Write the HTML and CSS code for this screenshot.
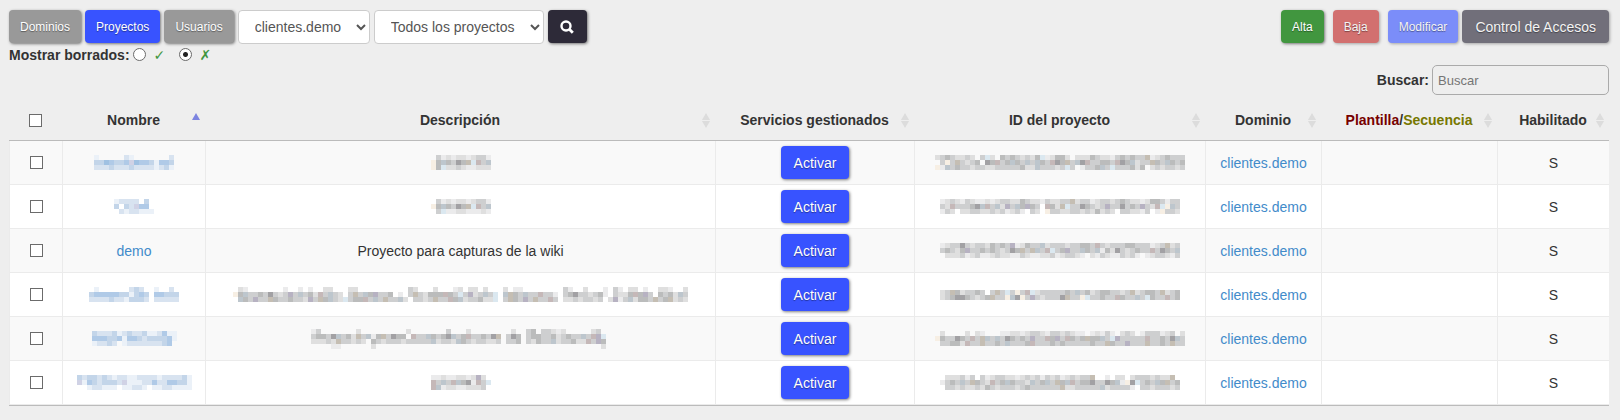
FILE: index.html
```html
<!DOCTYPE html>
<html lang="es">
<head>
<meta charset="utf-8">
<title>Proyectos</title>
<link rel="stylesheet" href="styles.css">
</head>

<body>
<div class="toolbar">
  <div class="tabs">
    <button type="button" class="btn grey">Dominios</button>
    <button type="button" class="btn blue">Proyectos</button>
    <button type="button" class="btn grey">Usuarios</button>
  </div>
  <select class="domain" aria-label="Dominio">
    <option>clientes.demo</option>
  </select>
  <select class="project" aria-label="Proyecto">
    <option>Todos los proyectos</option>
  </select>
  <button type="button" class="btn search" aria-label="Buscar proyectos">
    <svg width="14" height="14" viewBox="0 0 14 14">
      <circle cx="6" cy="6" r="4.5" fill="none" stroke="#fff" stroke-width="2.4"/>
      <path d="M9.3 9.3L12.8 12.8" stroke="#fff" stroke-width="2.8"/>
    </svg>
  </button>
  <div class="actions">
    <button type="button" class="btn green">Alta</button>
    <button type="button" class="btn red">Baja</button>
    <div class="pair">
      <button type="button" class="btn lightblue">Modificar</button>
      <button type="button" class="btn dark">Control de Accesos</button>
    </div>
  </div>
</div>

<div class="deleted">
  <b>Mostrar borrados:</b>
  <input type="radio" name="deleted" id="delyes"><label for="delyes">✓</label>
  <input type="radio" name="deleted" id="delno" checked><label for="delno">✗</label>
</div>

<div class="filter">
  <label for="filter">Buscar:</label>
  <input type="text" id="filter" placeholder="Buscar">
</div>

<table>
  <colgroup>
    <col class="ccheck"><col class="cname"><col><col class="cserv">
    <col class="cid"><col class="cdom"><col class="ctpl"><col class="cena">
  </colgroup>
  <thead>
    <tr>
      <th><input type="checkbox" aria-label="Seleccionar todos"></th>
      <th class="asc">Nombre</th>
      <th class="sort">Descripción</th>
      <th class="sort">Servicios gestionados</th>
      <th class="sort">ID del proyecto</th>
      <th class="sort">Dominio</th>
      <th class="sort"><span class="tpl">Plantilla</span>/<span class="seq">Secuencia</span></th>
      <th class="sort">Habilitado</th>
    </tr>
  </thead>
  <tbody>
    <tr>
      <td><input type="checkbox" aria-label="Seleccionar"></td>
      <td><span class="mosaic link" data-m="1.....21.......2/3354334v54431443/2223222322221231"></span></td>
      <td><span class="mosaic" data-m=".31212212331/y4b4354tcr3b/y4c223211222"></span></td>
      <td><button type="button" class="btn blue big">Activar</button></td>
      <td><span class="mosaic" data-m="23432232.3c2.43432324c12442.22243221343433t1234333/.3y3t3234.54r34b43b3b43r54t3b5r33443r54b233t43b434/y1b34332332233333422b33323c3.1334b3c333424.2323323"></span></td>
      <td><a href="#">clientes.demo</a></td>
      <td></td>
      <td>S</td>
    </tr>
    <tr>
      <td><input type="checkbox" aria-label="Seleccionar"></td>
      <td><span class="mosaic link" data-m="12222.3./3.32v44./.2122111"></span></td>
      <td><span class="mosaic" data-m=".31212212331/y4b4354tcr3b/.3c112211121"></span></td>
      <td><button type="button" class="btn blue big">Activar</button></td>
      <td><span class="mosaic" data-m="12321321121233224322132233t233123323432212443133/32r33345br3b2v3b4v43.r42tc3354323v335343v32rcyb34/132.2233223231231.32.y3322332324232.332213.1y3323"></span></td>
      <td><a href="#">clientes.demo</a></td>
      <td></td>
      <td>S</td>
    </tr>
    <tr>
      <td><input type="checkbox" aria-label="Seleccionar"></td>
      <td><a href="#">demo</a></td>
      <td>Proyecto para capturas de la wiki</td>
      <td><button type="button" class="btn blue big">Activar</button></td>
      <td><span class="mosaic" data-m="12335323324343v12433b2333233443r3233344333123t23/34324v3343432354t3tb3rc34v33b43b1425323433r3543b4/.2223123112322113211223123321.2132113231.1233213"></span></td>
      <td><a href="#">clientes.demo</a></td>
      <td></td>
      <td>S</td>
    </tr>
    <tr>
      <td><input type="checkbox" aria-label="Seleccionar"></td>
      <td><span class="mosaic link" data-m=".1......232..1..2./344444331343.44333/222232213332.22222"></span></td>
      <td><span class="mosaic" data-m=".21.......1..1.1..22...22..........32...2...12.22.2...2.11........31..2...1.31.22.1..221..2/y4b33435323v3b342r3b32.3t3b4v334.1.3t32444r43c3v23b3c.bt43b33r331.345332341.3224r4v3.4342b3/.b43v33t4334332v3t4b32c344r3b3t33b2.3323t33r4b233422c.3t43v3t33r3.22323323.2v13b2443t34t232"></span></td>
      <td><button type="button" class="btn blue big">Activar</button></td>
      <td><span class="mosaic" data-m="23t423343.3t3c3y3rc23333343b3423443323t23443t234/2345543234t33yb5y3v323335t33yc33433r433b3c433r34"></span></td>
      <td><a href="#">clientes.demo</a></td>
      <td></td>
      <td>S</td>
    </tr>
    <tr>
      <td><input type="checkbox" aria-label="Seleccionar"></td>
      <td><span class="mosaic link" data-m="32223123223112411/44433414432333341/12232.1222222234."></span></td>
      <td><span class="mosaic" data-m="13.......2.........2.......3...2........2..34.33212.....23../34435b342t3b14t3544.r33b4345b34r33435t.354.34433423433b3rvc/22232t33232.432333233333b2332b43233223.334.32433b233422r3v4./....11......2.............................................2."></span></td>
      <td><button type="button" class="btn blue big">Activar</button></td>
      <td><span class="mosaic" data-m=".2....2.21...11221233213323211.12131.232.1333123.2/y433543r3tb3b354343v33r4v3r434t44b3cv33333r33435b34/.33442r33t3343b3334r33343433333433t433v333t3343t33"></span></td>
      <td><a href="#">clientes.demo</a></td>
      <td></td>
      <td>S</td>
    </tr>
    <tr>
      <td><input type="checkbox" aria-label="Seleccionar"></td>
      <td><span class="mosaic link" data-m="32332321221122221222231/v14323332v1112242244331/..122111.11221.11221111"></span></td>
      <td><span class="mosaic" data-m="112112212v2./r3b3rb451r3c/rb122112223."></span></td>
      <td><button type="button" class="btn blue big">Activar</button></td>
      <td><span class="mosaic" data-m=".222313.3123322123231323123233t..1.22.23332322t./1343b3t432r34b4332b34b3t4br34453354b1y5c343b4t345/.33232232432333234333333t2233333b233331.332333233"></span></td>
      <td><a href="#">clientes.demo</a></td>
      <td></td>
      <td>S</td>
    </tr>
  </tbody>
</table>

<script src="mosaic.js"></script>
</body>
</html>
```
FILE: styles.css
```css
body {
    margin: 0;
    padding: 10px 11px 14px 9px;
    background: #eee;
    color: #333;
    font-family: "Liberation Sans", Arial, Helvetica, sans-serif;
    font-size: 14px;
    line-height: 20px;
}
a {
    color: #428bca;
    text-decoration: none;
}
.toolbar {
    display: flex;
    gap: 4px;
}
.tabs {
    display: flex;
    gap: 4px;
}
.btn {
    height: 33px;
    padding: 0 11px;
    border: 0;
    border-radius: 4px;
    color: #fff;
    font-family: inherit;
    font-size: 12px;
    text-shadow: 0 1px 1px rgba(0, 0, 0, 0.4);
    box-shadow: 1px 1px 3px rgba(0, 0, 0, 0.5);
}
.grey { background: #999; }
.blue { background: #3853ff; }
.green { background: #41963f; }
.red { background: #d2706f; }
.lightblue { background: #7b8df9; }
.dark {
    background: #716f7a;
    padding: 0 13px;
    font-size: 14px;
}
.red, .lightblue, .dark {
    color: #f4f4f4;
    box-shadow: 1px 1px 3px rgba(0, 0, 0, 0.3);
}
.big {
    padding: 0 13px;
    font-size: 14px;
}
.search {
    width: 39px;
    padding: 0;
    background: #2d2a38;
}
.search svg {
    vertical-align: middle;
}
select {
    height: 34px;
    padding: 0 12px;
    border: 1px solid #ccc;
    border-radius: 4px;
    background: #fff;
    color: #555;
    font-family: inherit;
    font-size: 14px;
}
.domain { width: 132px; }
.project { width: 170px; }
.actions {
    display: flex;
    gap: 9px;
    margin-left: auto;
}
.pair {
    display: flex;
    gap: 4px;
}
input[type=checkbox], input[type=radio] {
    appearance: none;
    box-sizing: border-box;
    width: 13px;
    height: 13px;
    border: 1px solid #6b6b6b;
    background: #fff;
}
input[type=checkbox] {
    display: block;
    margin: 0 auto;
}
input[type=checkbox]:checked {
    background: #6b6b6b;
}
input[type=radio] {
    margin: 0 8px 0 3px;
    border-radius: 50%;
}
input[type=radio]:checked {
    background: radial-gradient(circle, #222 0 2px, #fff 3px);
}
.deleted {
    display: flex;
    align-items: center;
    height: 21px;
}
.deleted label {
    width: 22px;
    color: #41963f;
    font-family: "DejaVu Sans", sans-serif;
    font-weight: bold;
}
.filter {
    display: flex;
    justify-content: flex-end;
    align-items: center;
    gap: 3px;
    font-weight: bold;
}
.filter input {
    box-sizing: border-box;
    width: 177px;
    height: 30px;
    padding: 0 5px;
    border: 1px solid #aaa;
    border-radius: 5px;
    background: transparent;
    font-family: inherit;
    font-size: 13px;
}
table {
    width: 100%;
    margin-top: 5px;
    border-collapse: separate;
    border-spacing: 0;
    border-bottom: 1px solid #bbb;
    table-layout: fixed;
}
.ccheck { width: 53px; }
.cname { width: 143px; }
.cserv { width: 199px; }
.cid { width: 291px; }
.cdom { width: 116px; }
.ctpl { width: 176px; }
.cena { width: 112px; }
th, td {
    box-sizing: border-box;
    height: 44px;
    padding: 0;
    text-align: center;
    vertical-align: middle;
}
th {
    position: relative;
    height: 41px;
    border-bottom: 1px solid #bbb;
}
td {
    border-left: 1px solid #ebebeb;
    border-bottom: 1px solid #ebebeb;
}
tbody tr { background: #fff; }
tbody tr:nth-child(odd) { background: #f9f9f9; }
.tpl { color: #700; }
.seq { color: #770; }

/* sort arrows */
.sort::before, .sort::after, .asc::before {
    content: "";
    position: absolute;
    right: 5px;
    border: 4px solid transparent;
}
.sort::before {
    bottom: 20px;
    border-top: 0;
    border-bottom: 7px solid #dcdcdc;
}
.sort::after {
    top: 21px;
    border-bottom: 0;
    border-top: 7px solid #dcdcdc;
}
.asc::before {
    bottom: 20px;
    border-top: 0;
    border-bottom: 7px solid #7c84e0;
}
.mosaic svg {
    display: block;
    margin: 0 auto;
}
```
FILE: mosaic.js
```js
// hidden values are drawn as a grid of blocks, one character for each
var size = 5;
var greys = {
    "1": "#ebebec", "2": "#dfdfdf", "3": "#cecfd0", "4": "#bbbcbc", "5": "#a2a1a4",
    "r": "#c5b8b8", "b": "#bdc6cd", "c": "#dbe8f0", "y": "#f7efe4",
    "t": "#c5beb3", "v": "#b7b2c2"
};
var blues = {
    "1": "#ebf1f8", "2": "#d8e3f0", "3": "#c3d5e9", "4": "#b0cae7", "5": "#a0c1e2",
    "v": "#d0d2e5"
};

document.querySelectorAll(".mosaic").forEach(function (el) {
    var colors = el.classList.contains("link") ? blues : greys;
    var rows = el.dataset.m.split("/");
    var out = "";
    rows.forEach(function (row, y) {
        for (var x = 0; x < row.length; x++) {
            if (colors[row[x]]) {
                out += '<rect x="' + x * size + '" y="' + y * size +
                    '" width="' + size + '" height="' + size +
                    '" fill="' + colors[row[x]] + '"/>';
            }
        }
    });
    el.innerHTML = '<svg width="' + rows[0].length * size + '" height="' +
        rows.length * size + '">' + out + '</svg>';
});
```
